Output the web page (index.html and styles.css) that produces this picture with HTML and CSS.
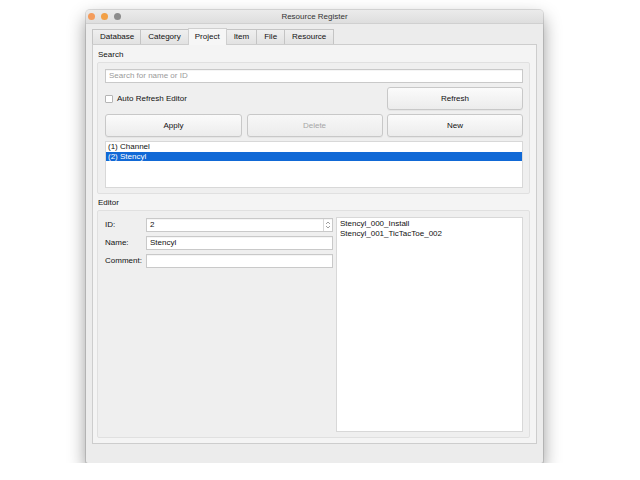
FILE: index.html
```html
<!DOCTYPE html>
<html>
<head>
<meta charset="utf-8">
<link rel="stylesheet" href="styles.css">
</head>
<body>
<div class="window">
  <div class="titlebar">
    <div class="lights">
      <span class="light red"></span>
      <span class="light yellow"></span>
      <span class="light grey"></span>
    </div>
    <div class="title">Resource Register</div>
  </div>
  <div class="content">
    <div class="tabs">
      <div class="tab">Database</div>
      <div class="tab">Category</div>
      <div class="tab active">Project</div>
      <div class="tab">Item</div>
      <div class="tab">File</div>
      <div class="tab">Resource</div>
    </div>
    <div class="pane">
      <div class="group-label">Search</div>
      <div class="group search">
        <div class="field placeholder">Search for name or ID</div>
        <div class="grid3">
          <div class="check"><span class="box"></span>Auto Refresh Editor</div>
          <div></div>
          <div class="btn">Refresh</div>
          <div class="btn">Apply</div>
          <div class="btn disabled">Delete</div>
          <div class="btn">New</div>
        </div>
        <div class="list">
          <div class="item">(1) Channel</div>
          <div class="item selected">(2) Stencyl</div>
        </div>
      </div>
      <div class="group-label">Editor</div>
      <div class="group editor">
        <div class="form">
          <div class="form-label">ID:</div>
          <div class="field spin"><span>2</span><span class="arrows"><svg width="6" height="10" viewBox="0 0 6 10"><path d="M1 4 L3 2 L5 4" fill="none" stroke="#888" stroke-width="0.8"/><path d="M1 6 L3 8 L5 6" fill="none" stroke="#888" stroke-width="0.8"/></svg></span></div>
          <div class="form-label">Name:</div>
          <div class="field">Stencyl</div>
          <div class="form-label">Comment:</div>
          <div class="field"></div>
        </div>
        <div class="list files">
          <div class="item">Stencyl_000_Install</div>
          <div class="item">Stencyl_001_TicTacToe_002</div>
        </div>
      </div>
    </div>
  </div>
</div>
</body>
</html>
```

FILE: styles.css
```css
* { box-sizing: border-box; }
html, body { margin: 0; padding: 0; background: #ffffff; }
body {
  font-family: "Liberation Sans", Arial, sans-serif;
  font-size: 8px;
  color: #111111;
  padding: 10px 0 0 86px;
}
.window {
  width: 457px;
  height: 453px;
  background: #ececec;
  border-radius: 4px 4px 2px 2px;
  box-shadow: 0 0 0 1px rgba(0,0,0,0.12), 0 8px 18px rgba(0,0,0,0.42);
  display: flex;
  flex-direction: column;
  overflow: hidden;
}
.titlebar {
  height: 14px;
  flex: none;
  background: linear-gradient(#ebebeb, #dedede);
  border-bottom: 1px solid #d0d0d0;
  display: flex;
  align-items: center;
  position: relative;
}
.lights { display: flex; gap: 6px; padding-left: 2px; }
.light { width: 7px; height: 7px; border-radius: 50%; display: block; }
.light.red { background: #f49c5c; }
.light.yellow { background: #f2a046; }
.light.grey { background: #8c8c8c; }
.title {
  position: absolute;
  left: 0; right: 0; top: 0; bottom: 0;
  text-align: center;
  line-height: 14px;
  color: #333333;
  font-size: 8px;
}
.content {
  flex: 1;
  padding: 5px 6px 19px 6px;
  display: flex;
  flex-direction: column;
}
.tabs {
  display: flex;
  height: 15px;
  align-items: flex-end;
  flex: none;
}
.tab {
  height: 15px;
  line-height: 14px;
  padding: 0 7px;
  background: linear-gradient(#efefef, #e2e2e2);
  border: 1px solid #c4c4c4;
  border-bottom: none;
  border-right: none;
  color: #111;
}
.tab:first-child { padding: 0 6px 0 7px; }
.tab:last-child { border-right: 1px solid #c4c4c4; }
.tab.active {
  height: 17px;
  line-height: 15px;
  background: #f6f6f6;
  border-color: #cfcfcf;
  border-right: 1px solid #cfcfcf;
  margin-bottom: -1px;
  position: relative;
  z-index: 1;
  padding: 0 6px;
}
.tab.active + .tab { border-left: none; }
.pane {
  flex: 1;
  background: #f4f4f4;
  border: 1px solid #cdcdcd;
  padding: 4px 6px 5px 4px;
  display: flex;
  flex-direction: column;
}
.group-label {
  height: 13px;
  line-height: 12px;
  padding-left: 1px;
}
.group {
  background: #efefef;
  border: 1px solid #e0e0e0;
  border-radius: 2px;
}
.search {
  padding: 6px 6px 5px 7px;
  display: flex;
  flex-direction: column;
  gap: 4px;
  margin-bottom: 3px;
}
.field {
  height: 14px;
  background: #ffffff;
  border: 1px solid #c9c9c9;
  line-height: 12px;
  padding: 0 3px;
  color: #111;
  box-shadow: inset 0 1px 0 rgba(0,0,0,0.04);
}
.field.placeholder { color: #9a9a9a; }
.grid3 {
  display: grid;
  grid-template-columns: 137px 136px 136px;
  column-gap: 4.5px;
  row-gap: 4px;
  grid-auto-rows: 23px;
}
.check { display: flex; align-items: center; gap: 4px; }
.box {
  width: 8px; height: 8px;
  background: #fff;
  border: 1px solid #b5b5b5;
  border-radius: 1px;
  display: block;
}
.btn {
  background: linear-gradient(#fbfbfb, #ececec);
  border: 1px solid #c8c8c8;
  border-radius: 3px;
  display: flex;
  align-items: center;
  justify-content: center;
  color: #111;
  box-shadow: 0 1px 0 rgba(0,0,0,0.04);
}
.btn.disabled { color: #a6a6a6; background: linear-gradient(#f7f7f7, #ececec); }
.list {
  background: #ffffff;
  border: 1px solid #d8d8d8;
}
.search .list { height: 47px; }
.item { height: 9.5px; line-height: 9.5px; padding-left: 2px; white-space: nowrap; }
.item.selected { background: #1169d6; color: #fff; }
.editor {
  flex: 1;
  display: flex;
  padding: 6px 6px 5px 7px;
  gap: 3px;
}
.form {
  width: 228px;
  padding-top: 1px;
  display: grid;
  grid-template-columns: 41px 187px;
  grid-auto-rows: 14px;
  row-gap: 4px;
  align-content: start;
}
.form-label { line-height: 14px; }
.spin { display: flex; justify-content: space-between; padding-right: 0; }
.arrows {
  width: 9px;
  height: 12px;
  border-left: 1px solid #d8d8d8;
  display: flex;
  align-items: center;
  justify-content: center;
}
.files { flex: 1; padding-top: 1px; }
.files .item { padding-left: 3px; }
```
